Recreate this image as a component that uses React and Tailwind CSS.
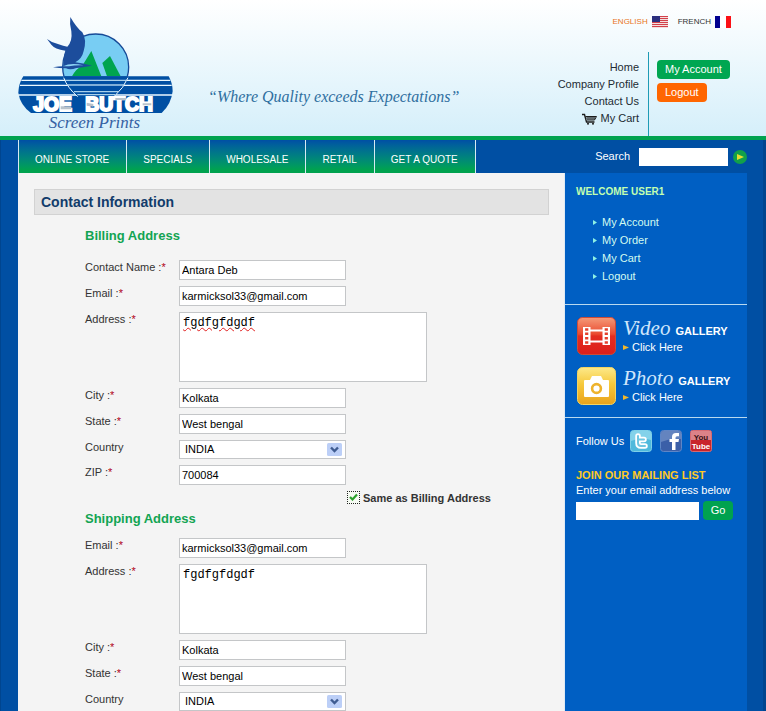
import React from "react";

const SANS = "font-['Liberation_Sans',Arial,sans-serif]";
const SERIF = "font-['Liberation_Serif',serif]";

function Logo() {
  return (
    <svg viewBox="54 42 468 351" className="h-[117px] w-[156px]" role="img" aria-label="Joe Butch Screen Prints">
      <defs>
        <clipPath id="disc"><circle cx="287" cy="200" r="98" /></clipPath>
        <clipPath id="upper"><rect x="180" y="90" width="220" height="139" /></clipPath>
      </defs>
      <circle cx="287" cy="201" r="99" fill="#78cdf3" stroke="#164a97" strokeWidth="4" clipPath="url(#upper)" />
      <g clipPath="url(#disc)">
        <path d="M216 229 Q230 204 246 199 L274 153 L304 229Z" fill="#00a44f" />
        <path d="M321 229 L307 189 L330 168 L362 229Z" fill="#00a44f" />
      </g>
      <path d="M70 229 H506 Q518 250 518 273 Q514 312 485 339 H93 Q60 314 55 278 Q56 250 70 229Z" fill="#004fa3" />
      <path d="M64 241 H511 M60 256 H515 M55 285 H517" stroke="#eaf8ff" strokeWidth="4" />
      <path d="M191 229 Q202 263 233 289 H342 Q372 263 384 229Z" fill="#004fa3" />
      <path d="M191 233 Q202 263 233 290 M342 290 Q372 263 384 233" fill="none" stroke="#eaf8ff" strokeWidth="3" />
      <path d="M195 241 H380 M203 255 H372 M222 275 H354 M232 284 H345" stroke="#a9d0ea" strokeWidth="4" />
      <path d="M211 51 Q230 84 247 97 Q261 119 251 153 Q246 176 226 187 Q248 190 276 197 Q246 202 229 204 Q211 211 198 205 Q177 205 159 202 Q175 199 190 199 Q190 170 196 152 Q164 147 154 134 L141 117 Q158 130 176 133 Q190 139 202 140 Q218 124 214 94 Q208 71 211 51Z" fill="#1c4d9c" />
      <path d="M189 199 Q213 187 250 196 Q226 195 207 199Z" fill="#8dd4f5" />
      <g fill="#fff" stroke="#fff" strokeWidth="6" fontFamily="Liberation Sans, sans-serif" fontWeight="700" fontSize="58">
        <text x="100" y="332">JOE</text>
        <text x="256" y="332">BUTCH</text>
      </g>
      <path d="M182 319 h32 v9 h-32z M260 308 l20 4 v8 l-20 -3z M346 294 h32 v6 h-32z M428 310 h26 v6 h-26z" fill="#b9c3cc" />
      <text x="146" y="383" fill="#3561a3" fontFamily="Liberation Serif, serif" fontStyle="italic" fontSize="51">Screen Prints</text>
    </svg>
  );
}

function UsFlag() {
  return (
    <svg viewBox="0 0 16 12" className="h-3 w-4" aria-hidden="true">
      <rect width="16" height="12" fill="#f3dede" />
      <path d="M0 .5h16M0 2.500h16M0 4.500h16M0 6.500h16M0 8.500h16M0 10.500h16" stroke="#d2404a" />
      <rect width="8" height="6" fill="#2b2f7e" />
    </svg>
  );
}

function FrFlag() {
  return (
    <svg viewBox="0 0 16 12" className="h-3 w-4" aria-hidden="true">
      <rect width="16" height="12" fill="#fff" />
      <rect width="5" height="12" fill="#00008f" />
      <rect x="11" width="5" height="12" fill="#fb1016" />
    </svg>
  );
}

function CartIcon() {
  return (
    <svg viewBox="0 0 16 12" className="h-3 w-4" fill="none" stroke="#1d1d1d" aria-hidden="true">
      <path d="M0 1.500h2.500l2 7.500h8" strokeWidth="1.400" />
      <path d="M3.500 3.500h11l-2 3.500H5" />
      <path d="M6 3v4M8 3v4M10 3v4M12 3v4M4 5h9.500" strokeWidth=".8" />
      <circle cx="6" cy="10.700" r="1" fill="#1d1d1d" stroke="none" />
      <circle cx="11" cy="10.700" r="1" fill="#1d1d1d" stroke="none" />
    </svg>
  );
}

function Arrow({ className }) {
  return (
    <svg viewBox="0 0 5 6" preserveAspectRatio="none" className={className} aria-hidden="true">
      <path d="M0 0L5 3L0 6Z" fill="currentColor" />
    </svg>
  );
}

function Header() {
  return (
    <header className="flex h-[140px] border-b-4 border-[#00a24f] bg-gradient-to-b from-white to-[#d5effa] pl-[18px] pr-[35px]">
      <a href="#home" className="pt-[14px]"><Logo /></a>
      <p className={`${SERIF} ml-[34px] mt-[85px] text-[16px] leading-6 text-[#2f6f9f] italic whitespace-nowrap`}>
        “Where Quality exceeds Expectations”
      </p>
      <div className="ml-auto flex flex-col items-end justify-between">
        <div className="flex gap-[10px] pt-4 text-[8px] leading-[12px]">
          <a href="#en" className="flex items-center gap-1 text-[#e8741c]">ENGLISH <UsFlag /></a>
          <a href="#fr" className="flex items-center gap-1 text-[#333]">FRENCH <FrFlag /></a>
        </div>
        <div className="flex h-[84px]">
          <nav className="flex flex-col items-end border-r border-[#1e9bb5] pr-[9px] pt-[7px] leading-[17px] text-[#222b33]">
            <a href="#home">Home</a>
            <a href="#profile">Company Profile</a>
            <a href="#contact">Contact Us</a>
            <a href="#cart" className="flex items-center gap-[3px]"><CartIcon />My Cart</a>
          </nav>
          <div className="flex w-[82px] flex-col items-start gap-1 pl-2 pt-2 text-white">
            <button className="h-[19px] rounded bg-[#00a651] px-2">My Account</button>
            <button className="h-[19px] rounded bg-[#ff6600] px-2">Logout</button>
          </div>
        </div>
      </div>
    </header>
  );
}

const NAV = ["ONLINE STORE", "SPECIALS", "WHOLESALE", "RETAIL", "GET A QUOTE"];

function NavBar() {
  return (
    <div className="flex h-[33px] justify-between text-white">
      <nav className="flex border-l border-[#d6eaf2]">
        {NAV.map((n) => (
          <a key={n} href="#nav" className="flex items-center whitespace-nowrap border-r border-[#d6eaf2] bg-gradient-to-b from-[#004fa5] to-[#00a24f] to-90% pl-4 pr-[17px] pt-[5px] text-[10px]">
            {n}
          </a>
        ))}
      </nav>
      <form className="flex items-center gap-[5px]" onSubmit={(e) => e.preventDefault()}>
        <label htmlFor="search" className="pr-1">Search</label>
        <input id="search" className="h-[18px] w-[89px] bg-white px-1 text-black" />
        <button aria-label="Search" className="flex size-[14px] items-center justify-center rounded-full bg-[#12a04a]">
          <Arrow className="h-[6px] w-[7px] text-[#e8dc2e]" />
        </button>
      </form>
    </div>
  );
}

const FIELD = "h-5 w-[167px] border border-[#c4c6c8] bg-white px-[2px] text-[11px] text-black";

function Row({ id, label, required = true, children }) {
  return (
    <div className="flex items-start">
      <label htmlFor={id} className="w-[94px] shrink-0 leading-[15px] text-[#333]">
        {label}
        {required && <> :<span className="text-[#b00020]">*</span></>}
      </label>
      {children}
    </div>
  );
}

function TextRow({ id, label, value }) {
  return (
    <Row id={id} label={label}>
      <input id={id} defaultValue={value} className={FIELD} />
    </Row>
  );
}

function AddressFields({ prefix, wavy }) {
  return (
    <>
      <TextRow id={`${prefix}-email`} label="Email" value="karmicksol33@gmail.com" />
      <Row id={`${prefix}-address`} label="Address">
        <textarea
          id={`${prefix}-address`}
          defaultValue="fgdfgfdgdf"
          spellCheck={false}
          className={`h-[70px] w-[248px] resize-none border border-[#c4c6c8] bg-white px-[3px] py-[3px] font-['Liberation_Mono',monospace] text-[12px] leading-[14px] text-black ${wavy ? "underline decoration-[#e02020] decoration-wavy decoration-1" : ""}`}
        />
      </Row>
      <TextRow id={`${prefix}-city`} label="City" value="Kolkata" />
      <TextRow id={`${prefix}-state`} label="State" value="West bengal" />
      <Row id={`${prefix}-country`} label="Country" required={false}>
        <div className="relative">
          <select id={`${prefix}-country`} className="block h-[19px] w-[167px] appearance-none border border-[#c4c6c8] bg-white px-[5px] text-[11px] text-black">
            <option>INDIA</option>
          </select>
          <svg viewBox="0 0 15 13" className="pointer-events-none absolute right-1 top-[3px] h-[13px] w-[15px]" aria-hidden="true">
            <rect width="15" height="13" rx="1.500" fill="#bccff7" />
            <path d="M4 4.500L7.500 8L11 4.500" fill="none" stroke="#3f5c91" strokeWidth="2.400" />
          </svg>
        </div>
      </Row>
    </>
  );
}

function ContactForm() {
  const heading = "text-[13px] leading-5 font-bold text-[#12a452]";
  return (
    <main className="min-w-0 flex-1 bg-[#f4f4f4] pl-4 pr-[15px] pt-4">
      <h1 className="h-[26px] border border-[#d2d2d2] bg-[#e3e3e3] px-[6px] text-[14px] leading-6 font-bold text-[#123c6b]">Contact Information</h1>
      <form className="pl-[51px]">
        <h2 className={`${heading} mt-[11px] mb-[14px]`}>Billing Address</h2>
        <div className="flex flex-col gap-1.5">
          <TextRow id="bill-name" label="Contact Name" value="Antara Deb" />
          <AddressFields prefix="bill" wavy />
          <TextRow id="bill-zip" label="ZIP" value="700084" />
        </div>
        <label className="mt-1 ml-[262px] flex h-4 items-center gap-[3px] font-bold text-[#333]">
          <span className="relative flex size-[13px]">
            <input type="checkbox" defaultChecked className="peer size-[13px] appearance-none border border-dotted border-[#222] bg-[#f6fbf3]" />
            <svg viewBox="0 0 13 13" className="pointer-events-none absolute inset-0 hidden peer-checked:block" aria-hidden="true">
              <path d="M3 6L5.500 8.500L10 3.500" fill="none" stroke="#2aa02a" strokeWidth="2.200" />
            </svg>
          </span>
          <span className="pt-[3px] whitespace-nowrap">Same as Billing Address</span>
        </label>
        <h2 className={`${heading} mt-1 mb-[9px]`}>Shipping Address</h2>
        <div className="flex flex-col gap-1.5">
          <AddressFields prefix="ship" />
        </div>
      </form>
    </main>
  );
}

function VideoIcon() {
  return (
    <svg viewBox="0 0 39 38" className="h-[38px] w-[39px] shrink-0" aria-hidden="true">
      <defs>
        <linearGradient id="red" x2="0" y2="1"><stop stopColor="#f59a78" /><stop offset=".45" stopColor="#ea4a2f" /><stop offset=".5" stopColor="#e32d20" /><stop offset="1" stopColor="#dc1f1c" /></linearGradient>
      </defs>
      <rect x=".5" y=".5" width="38" height="37" rx="5" fill="url(#red)" stroke="#cf4b35" />
      <path d="M6 10h7.500v18H6zM25.500 10H33v18h-7.500z" fill="#fff" />
      <path d="M12 13.500h15M12 24.500h15" stroke="#fff" strokeWidth="2.200" />
      <path d="M9.700 11.300v16M29.300 11.300v16" stroke="#e4402c" strokeWidth="3.200" strokeDasharray="2.500 1.800" />
    </svg>
  );
}

function PhotoIcon() {
  return (
    <svg viewBox="0 0 39 38" className="h-[38px] w-[39px] shrink-0" aria-hidden="true">
      <defs>
        <linearGradient id="gold" x2="0" y2="1"><stop stopColor="#fde98a" /><stop offset=".45" stopColor="#f6c93c" /><stop offset="1" stopColor="#e9a21c" /></linearGradient>
      </defs>
      <rect x=".5" y=".5" width="38" height="37" rx="5" fill="url(#gold)" stroke="#f3d463" />
      <path d="M8 13h5l2-4h9l2 4h5q1 0 1 1v15q0 1-1 1H8q-1 0-1-1V14q0-1 1-1Z" fill="#fff" />
      <circle cx="19.500" cy="21.500" r="4.400" fill="#fff" stroke="#eeb32c" strokeWidth="2.600" />
    </svg>
  );
}

function Gallery({ icon, name }) {
  return (
    <a href="#gallery" className="flex h-[38px] gap-[7px] text-white">
      {icon}
      <span className="flex flex-col">
        <span className="flex h-[23px] items-baseline gap-[5px] leading-[22px]">
          <span className={`${SERIF} text-[21px] italic text-[#cfe6fb]`}>{name}</span>
          <span className="text-[11px] font-bold">GALLERY</span>
        </span>
        <span className="flex items-center gap-[3px] leading-[14px]">
          <Arrow className="h-[5px] w-[6px] text-[#f2b82a]" />Click Here
        </span>
      </span>
    </a>
  );
}

function SocialLinks() {
  const box = "size-[22px]";
  return (
    <div className="flex items-center gap-2 text-white">
      <span className="-mr-0.5 whitespace-nowrap">Follow Us</span>
      <a href="#twitter" aria-label="Twitter">
        <svg viewBox="0 0 22 22" className={box}>
          <rect x=".5" y=".5" width="21" height="21" rx="3" fill="#4fb9dc" stroke="#7fd0e8" />
          <path d="M1 3q0-2 2-2h16q2 0 2 2v7Q11 7 1 11Z" fill="#83d2ea" />
          <path d="M8 6v7q0 3 3 3h4M8 9.500h6" fill="none" stroke="#fff" strokeWidth="5.500" strokeLinecap="round" />
          <path d="M8 6v7q0 3 3 3h4M8 9.500h6" fill="none" stroke="#6fc6e2" strokeWidth="2" strokeLinecap="round" />
        </svg>
      </a>
      <a href="#facebook" aria-label="Facebook">
        <svg viewBox="0 0 22 22" className={box}>
          <rect x=".5" y=".5" width="21" height="21" rx="3" fill="#3b5fa8" stroke="#5f86c6" />
          <path d="M1 3q0-2 2-2h16q2 0 2 2v6Q11 8 1 12Z" fill="#6484bf" />
          <path d="M12 20v-8H9.500V9H12V7q0-4 4-4h3v3.300h-2q-1.500 0-1.500 1.500V9H19l-.5 3h-3v8Z" fill="#fff" />
        </svg>
      </a>
      <a href="#youtube" aria-label="YouTube">
        <svg viewBox="0 0 22 22" className={box}>
          <rect x=".5" y=".5" width="21" height="21" rx="2" fill="#c9242b" stroke="#d56a72" />
          <path d="M1 1h20v9H1z" fill="#dc8288" />
          <g fontFamily="Liberation Sans, sans-serif" fontWeight="700" textAnchor="middle">
            <text x="11" y="9.500" fontSize="8" fill="#3a1014">You</text>
            <text x="11" y="18.500" fontSize="8" fill="#fff">Tube</text>
          </g>
        </svg>
      </a>
    </div>
  );
}

function Sidebar() {
  return (
    <aside className="w-[183px] shrink-0 border-l border-[#dfeaf4] bg-[#005fc3] text-white">
      <section className="h-[132px] border-b border-[#b9d9ef] pl-[11px] pt-3">
        <h2 className="text-[10px] leading-[14px] font-bold text-[#c2ffb0]">WELCOME USER1</h2>
        <ul className="mt-[14px] pl-[17px] leading-[18px] text-[#d3fbf0]">
          {["My Account", "My Order", "My Cart", "Logout"].map((t) => (
            <li key={t}>
              <a href="#account" className="flex items-center gap-[5px]"><Arrow className="h-[5px] w-1 text-[#8df0e4]" />{t}</a>
            </li>
          ))}
        </ul>
      </section>
      <section className="flex h-[113px] flex-col gap-3 border-b border-[#b9d9ef] pl-3 pt-3">
        <Gallery icon={<VideoIcon />} name="Video" />
        <Gallery icon={<PhotoIcon />} name="Photo" />
      </section>
      <section className="pl-[11px] pt-3">
        <SocialLinks />
        <form className="mt-4" onSubmit={(e) => e.preventDefault()}>
          <h2 className="leading-[15px] font-bold text-[#ffc926] whitespace-nowrap">JOIN OUR MAILING LIST</h2>
          <label htmlFor="mail" className="block leading-[15px] whitespace-nowrap">Enter your email address below</label>
          <div className="mt-[3px] flex items-center gap-1">
            <input id="mail" type="email" className="h-[18px] w-[123px] bg-white px-1 text-black" />
            <button className="h-[19px] w-[30px] rounded bg-[#00a24f]">Go</button>
          </div>
        </form>
      </section>
    </aside>
  );
}

export default function App() {
  return (
    <div className={`${SANS} flex min-h-screen flex-col bg-[#004fa3] text-[11px] leading-[15px]`}>
      <Header />
      <div className="flex flex-1 flex-col border-l border-r-[3px] border-[#00458f] pl-[17px] pr-4">
        <NavBar />
        <div className="flex flex-1">
          <ContactForm />
          <Sidebar />
        </div>
      </div>
    </div>
  );
}
